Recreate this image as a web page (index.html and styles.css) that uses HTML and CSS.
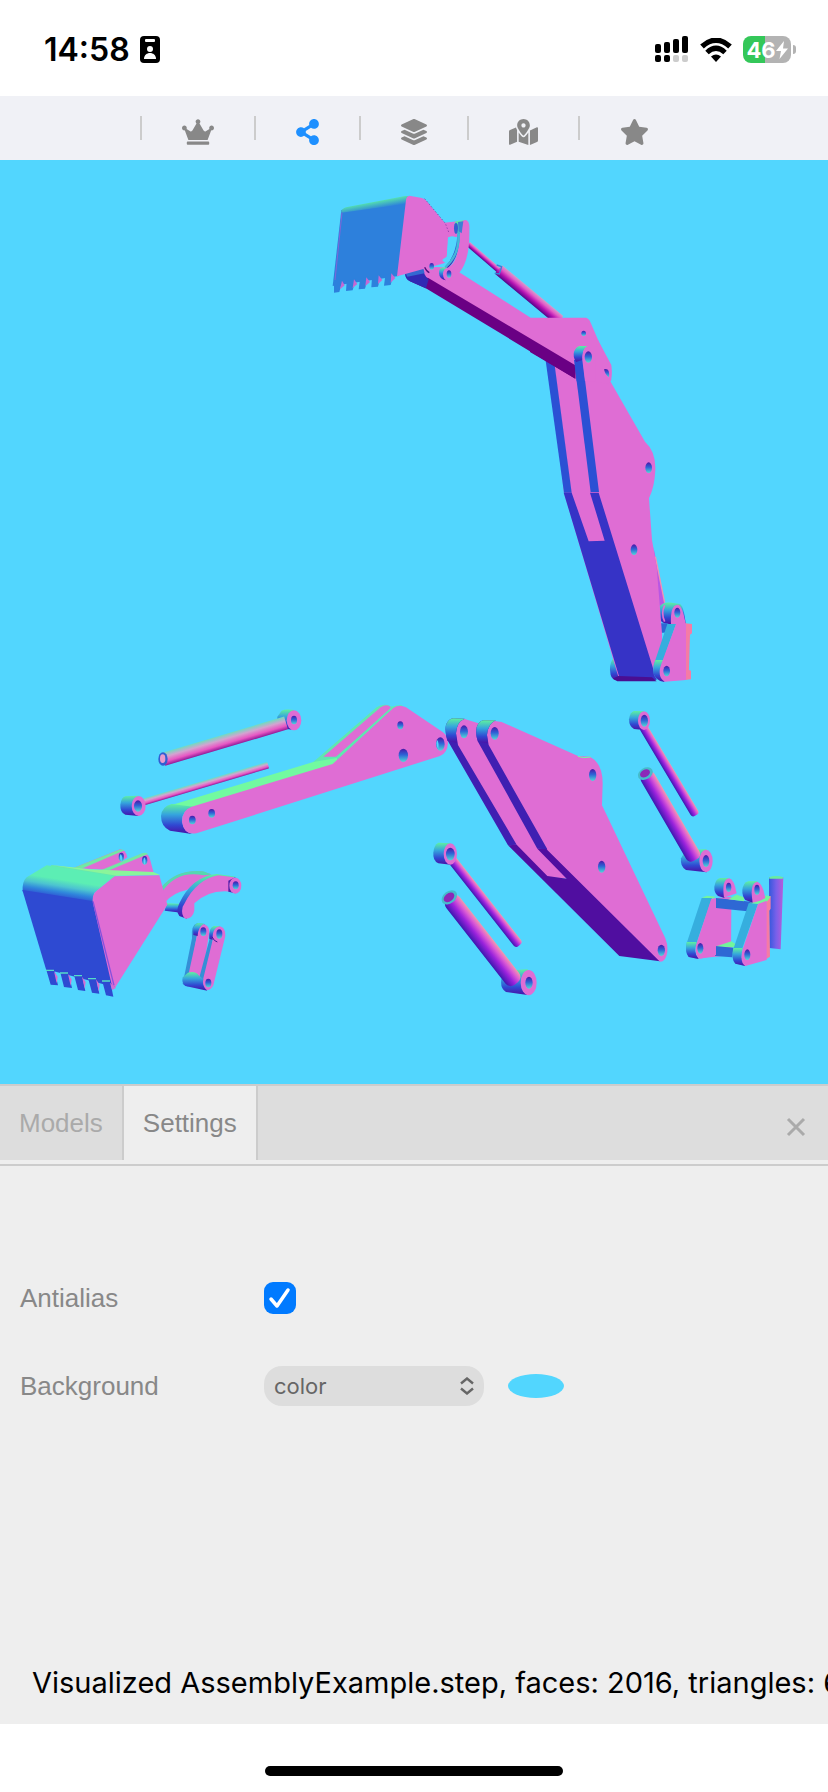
FILE: index.html
```html
<!DOCTYPE html>
<html lang="en">

<head>
    <meta charset="UTF-8">
    <meta name="viewport" content="width=device-width, initial-scale=1.0">
    <title>Model Viewer</title>
    <link rel="stylesheet" href="styles.css">
</head>

<body>

    <header class="statusbar">
        <div class="status-left">
            <span class="time">14:58</span>
            <svg class="badge-icon" viewBox="0 0 20 27">
                <rect width="20" height="27" rx="4" />
                <rect x="5" y="3" width="10" height="3" rx="1" fill="#fff" />
                <circle cx="10" cy="13" r="3" fill="#fff" />
                <path d="M4 23c0-4 3-6 6-6s6 2 6 6z" fill="#fff" />
            </svg>
        </div>
        <div class="status-right">
            <svg class="signal-icon" viewBox="0 0 34 27">
                <rect x="0" y="8" width="6" height="9" rx="2" />
                <rect x="9" y="6" width="6" height="11" rx="2" />
                <rect x="18" y="3" width="6" height="14" rx="2" />
                <rect x="27" y="0" width="6" height="17" rx="2" />
                <rect x="0" y="19" width="6" height="7" rx="2" />
                <rect x="9" y="19" width="6" height="7" rx="2" />
                <rect x="18" y="19" width="6" height="7" rx="2" fill="#ccc" />
                <rect x="27" y="19" width="6" height="7" rx="2" fill="#ccc" />
            </svg>
            <svg class="wifi-icon" viewBox="0 0 32 24">
                <path d="M2 8.500Q16-4 30 8.500" fill="none" stroke="#000" stroke-width="5.400" />
                <path d="M7 14.500Q16 6 25 14.500" fill="none" stroke="#000" stroke-width="5" />
                <path d="M11 18.500Q16 14.500 21 18.500L16 24z" />
            </svg>
            <div class="battery"><span>46</span><svg class="bolt-icon" viewBox="0 0 12 18"><path d="M8 0L0 10h5L3.500 18 12 7.500H7z" fill="#fff" /></svg></div>
        </div>
    </header>

    <nav class="toolbar">
        <a href="#" aria-label="Home"><svg width="32" height="26" viewBox="0 0 640 512"><path d="M528 448H112c-8.800 0-16 7.200-16 16v32c0 8.800 7.200 16 16 16h416c8.800 0 16-7.200 16-16v-32c0-8.800-7.200-16-16-16zm64-320c-26.500 0-48 21.500-48 48 0 7.100 1.600 13.700 4.400 19.800L476 239.200c-15.400 9.200-35.300 4-44.200-11.600L350.300 85C361 76.200 368 63 368 48c0-26.500-21.500-48-48-48s-48 21.500-48 48c0 15 7 28.200 17.700 37l-81.500 142.600c-8.900 15.600-28.900 20.800-44.200 11.600l-72.300-43.400c2.700-6 4.400-12.700 4.400-19.800 0-26.500-21.500-48-48-48S0 149.500 0 176s21.500 48 48 48c2.600 0 5.200-.4 7.700-.8L128 416h384l72.300-192.800c2.500.4 5.100.8 7.700.8 26.500 0 48-21.500 48-48s-21.500-48-48-48z" /></svg></a>
        <a href="#" class="active" aria-label="Share"><svg width="23" height="26" viewBox="0 0 448 512"><path d="M352 320c-22.600 0-43.400 7.800-59.800 20.900l-102.500-64a96.500 96.500 0 0 0 0-41.700l102.500-64C308.600 184.200 329.400 192 352 192c53 0 96-43 96-96S405 0 352 0s-96 43-96 96c0 7.200.8 14.100 2.300 20.800l-102.500 64.100C139.400 167.800 118.600 160 96 160c-53 0-96 43-96 96s43 96 96 96c22.600 0 43.400-7.800 59.800-20.900l102.500 64.100A96.300 96.300 0 0 0 256 416c0 53 43 96 96 96s96-43 96-96-43-96-96-96z" /></svg></a>
        <a href="#" aria-label="Layers"><svg width="26" height="26" viewBox="0 0 512 512"><path d="M12.400 148l232.900 105.700c6.800 3.100 14.500 3.100 21.300 0L499.600 148c16.500-7.500 16.500-32.500 0-40L266.700 2.300a25.600 25.600 0 0 0-21.300 0L12.400 108c-16.500 7.500-16.500 32.500 0 40zm487.200 88.300L441.500 210l-161.600 73.300c-7.600 3.400-15.600 5.100-23.900 5.100s-16.300-1.700-23.900-5.100L70.500 210l-58.100 26.300c-16.500 7.500-16.500 32.500 0 40l232.900 105.600c6.800 3.100 14.500 3.100 21.300 0l233-105.600c16.500-7.500 16.500-32.500 0-40zm0 127.800l-57.900-26.200-161.800 73.300c-7.600 3.400-15.600 5.200-23.900 5.200s-16.300-1.800-23.900-5.200L70.300 337.900l-57.900 26.200c-16.500 7.500-16.500 32.500 0 40l232.900 105.600c6.800 3.100 14.500 3.100 21.300 0l233-105.600c16.500-7.500 16.500-32.500 0-40z" /></svg></a>
        <a href="#" aria-label="Map"><svg width="29" height="26" viewBox="0 0 576 512"><path d="M288 0c-69.600 0-126 56.400-126 126 0 56.300 82.400 158.800 113.900 196 6.400 7.500 17.800 7.500 24.200 0C331.700 284.800 414 182.300 414 126 414 56.400 357.600 0 288 0zm0 168c-23.200 0-42-18.800-42-42s18.800-42 42-42 42 18.800 42 42-18.800 42-42 42zM20.100 216A32 32 0 0 0 0 245.700V496c0 11.300 11.400 19.100 21.900 14.900L160 448V214.900c-8.800-16-16.100-31.500-21.300-46.400L20.100 216zM288 359.700c-14.100 0-27.400-6.200-36.500-17-19.700-23.200-40.600-49.600-59.500-76.700v182l192 64V266c-18.900 27.100-39.800 53.500-59.500 76.700-9.100 10.800-22.400 17-36.500 17zm266.100-198.500L416 224v288l139.900-56a32 32 0 0 0 20.100-29.700V176c0-11.300-11.400-19.100-21.900-14.800z" /></svg></a>
        <a href="#" aria-label="Favorites"><svg width="29" height="26" viewBox="0 0 576 512"><path d="M259.300 17.800L194 150.200 47.900 171.500c-26.200 3.800-36.700 36.100-17.700 54.600l105.700 103-25 145.500c-4.500 26.300 23.200 46 46.400 33.700L288 439.600l130.700 68.700c23.200 12.200 50.900-7.400 46.400-33.700l-25-145.500 105.700-103c19-18.500 8.500-50.800-17.700-54.600L382 150.200 316.700 17.800c-11.700-23.600-45.600-23.900-57.400 0z" /></svg></a>
    </nav>

    <main class="viewer">
        <svg class="scene" viewBox="0 160 828 924">
            <defs>
                <linearGradient id="boss" x1="0" y1="0" x2="0" y2="1">
                    <stop offset="0" stop-color="#5ff0a0" />
                    <stop offset=".35" stop-color="#35a5dd" />
                    <stop offset=".7" stop-color="#3048d2" />
                    <stop offset="1" stop-color="#4a10a5" />
                </linearGradient>
                <linearGradient id="hole" x1="0" y1="0" x2="0" y2="1">
                    <stop offset="0" stop-color="#4a18a8" />
                    <stop offset=".45" stop-color="#2e62d6" />
                    <stop offset="1" stop-color="#50d8d8" />
                </linearGradient>
                <linearGradient id="tube" x1="0" y1="0" x2="0" y2="1">
                    <stop offset="0" stop-color="#70dcc0" />
                    <stop offset=".35" stop-color="#d3a3d0" />
                    <stop offset=".7" stop-color="#e858c4" />
                    <stop offset="1" stop-color="#901a98" />
                </linearGradient>
                <linearGradient id="rod" x1="0" y1="0" x2="0" y2="1">
                    <stop offset="0" stop-color="#f09aae" />
                    <stop offset=".25" stop-color="#dd5cd4" />
                    <stop offset=".58" stop-color="#9a22dc" />
                    <stop offset="1" stop-color="#3c18b0" />
                </linearGradient>
                <linearGradient id="ram" x1="0" y1="0" x2="0" y2="1">
                    <stop offset="0" stop-color="#d0a0cc" />
                    <stop offset=".3" stop-color="#e45cc8" />
                    <stop offset=".65" stop-color="#b010b0" />
                    <stop offset="1" stop-color="#50088a" />
                </linearGradient>
                <linearGradient id="lip-top" gradientUnits="userSpaceOnUse" x1="152" y1="68" x2="156" y2="90">
                    <stop offset="0" stop-color="#52dcb0" />
                    <stop offset="1" stop-color="#2d80dc" />
                </linearGradient>
                <linearGradient id="lip" gradientUnits="userSpaceOnUse" x1="150" y1="118" x2="141" y2="174">
                    <stop offset="0" stop-color="#5ceeb4" />
                    <stop offset=".35" stop-color="#4cc4d0" />
                    <stop offset=".65" stop-color="#3088dc" />
                    <stop offset="1" stop-color="#2e4ad2" />
                </linearGradient>
                <linearGradient id="pin" x1="0" y1="0" x2="1" y2="0">
                    <stop offset="0" stop-color="#3558dc" />
                    <stop offset=".5" stop-color="#7860ea" />
                    <stop offset="1" stop-color="#b85cda" />
                </linearGradient>
            </defs>

            <!-- assembled boom, lower part -->
            <g transform="translate(530 340) scale(.33333)">
                <path d="M370 620L404 790 388 800 380 740z" fill="#b857e4" />
                <path d="M376 650L404 788" stroke="#f092b4" stroke-width="4" />
                <path d="M388 800Q400 785 425 788L450 792Q462 800 467 852H415Q388 848 388 830z" fill="url(#boss)" />
                <path d="M404 796Q392 820 404 845" fill="none" stroke="#df6dd4" stroke-width="5" />
                <path d="M423 852Q420 795 443 794 457 794 467 852z" fill="#df6dd4" />
                <ellipse cx="442" cy="818" rx="9" ry="15" fill="url(#hole)" />
                <path d="M390 850H415V878H392z" fill="#2e68d4" />
                <path d="M465 850L486 852V880L480 884 477 990 483 992V1018L465 1020z" fill="#f57ba5" />
                <path d="M250 955Q235 975 242 1005 246 1020 262 1020L290 1020z" fill="url(#boss)" />
                <path d="M204 0L244 75Q248 110 240 122L345 305Q378 335 376 390 374 440 357 475L366 600 380 680 396 880V940L376 1018 265 1010 102 458 60 80 60 20z" fill="#df6dd4" />
                <path d="M47 62L74 76 125 458H102z" fill="#2b50d4" />
                <path d="M101 458H125L176 604 224 602 180 458H206L380 1020 268 1012z" fill="#3633c6" />
                <path d="M265 1008L366 1012 380 1024H262L248 1016z" fill="#4a0e92" />
                <path d="M132 60L158 64 207 456H182z" fill="#2b50d4" />
                <path d="M0 0L136 76V116L0 36z" fill="#6a0084" />
                <path d="M150 18H176Q155 30 156 66L140 66Q128 58 130 38 134 20 150 18z" fill="url(#boss)" />
                <ellipse cx="175" cy="51" rx="11" ry="17" fill="url(#hole)" />
                <path d="M222 87Q240 85 238 112 228 108 222 87z" fill="url(#hole)" />
                <ellipse cx="356" cy="383" rx="10" ry="16" fill="url(#hole)" />
                <ellipse cx="312" cy="629" rx="10" ry="16" fill="url(#hole)" />
                <path d="M396 880L405 878 396 930z" fill="#52d6fe" />
                <path d="M412 852H438L398 966Q382 990 398 1024 370 1020 370 992 370 972 376 960z" fill="#36aede" />
                <path d="M376 960H400Q384 990 404 1026 370 1020 370 992 370 972 376 960z" fill="url(#boss)" />
                <path d="M438 852H468V1020L404 1025Q380 1010 394 972z" fill="#df6dd4" />
                <ellipse cx="410" cy="993" rx="10" ry="16" fill="url(#hole)" />
            </g>

            <!-- assembled stick and bucket -->
            <g transform="translate(320 180) scale(.33333)">
                <g transform="translate(445 192) rotate(40.800)"><rect y="-8" width="125" height="16" fill="url(#ram)" /></g>
                <g transform="translate(535 268) rotate(39.700)"><rect y="-17" width="240" height="34" rx="4" fill="url(#ram)" /></g>
                <path d="M530 255L545 260 538 282 524 280" fill="none" stroke="#3585d8" stroke-width="4" />
                <path d="M257 276L310 260 372 262 420 278 632 413H798Q808 416 812 428L874 572V600L865 612 790 600 765 560 320 296z" fill="#df6dd4" />
                <path d="M256 280L325 294 766 556V596L320 326 270 304Q256 296 256 280z" fill="#6a0084" />
                <path d="M256 278L308 260Q310 286 326 298L318 325 270 304Q254 296 256 278z" fill="#3029b4" />
                <path d="M256 278L308 260 314 280 262 290z" fill="#3468d2" />
                <path d="M762 540L788 535 796 604H770z" fill="#2b50d4" />
                <path d="M780 498H802Q786 505 787 540L768 546Q758 530 762 515 768 500 780 498z" fill="url(#boss)" />
                <path d="M787 540Q788 500 806 500 824 502 826 530V604H795z" fill="#df6dd4" />
                <ellipse cx="805" cy="531" rx="11" ry="17" fill="url(#hole)" />
                <ellipse cx="791" cy="460" rx="7" ry="8" fill="url(#hole)" />
                <path d="M852 568Q870 562 867 592 856 586 852 568z" fill="url(#hole)" />
                <path d="M64 90L258 50 260 72 236 288 38 318z" fill="#2d80dc" />
                <path d="M64 92Q70 82 86 80L256 48 268 48 256 72 64 98z" fill="url(#lip-top)" />
                <path d="M66 98L44 310" stroke="#8065d8" stroke-width="3" />
                <path d="M42 300H68L58 336 42 338zM80 304L108 294 98 331 78 333zM120 298L146 288 135 326 116 328zM156 292L184 282 174 320 154 322zM196 286L222 276 212 315 192 317z" fill="#2d80dc" />
                <path d="M66 302L74 316 60 328zM102 298L112 312 98 324zM139 292L150 306 136 318zM176 286L187 300 174 312zM214 280L226 294 212 308z" fill="#c668d4" />
                <path d="M268 47L306 54Q316 57 322 66L374 128 412 124 420 170 384 172 380 240 372 250 256 282 231 289 258 60Q260 48 268 47z" fill="#df6dd4" />
                <path d="M386 172Q398 165 412 174L412 200Q400 240 382 246 366 248 368 238L380 230z" fill="#52d6fe" />
                <path d="M314 56L376 130 386 156" fill="none" stroke="#6a2599" stroke-width="2" stroke-dasharray="4 6" />
                <path d="M404 128Q410 120 436 121L430 160 420 190Q410 240 384 264L375 262Q410 225 412 160L404 154z" fill="url(#boss)" />
                <path d="M422 128Q428 119 438 120 450 124 448 150 450 240 418 278 410 292 374 300L378 266Q400 256 409 230 418 200 420 160z" fill="#df6dd4" />
                <path d="M416 162Q418 225 376 262" fill="none" stroke="#42b8d8" stroke-width="7" />
                <ellipse cx="408" cy="145" rx="6" ry="17" fill="#345fd0" />
                <path d="M414 126L430 124 425 160 416 154z" fill="#3d80d4" />
                <path d="M370 262Q356 264 357 280 358 298 378 301L384 264z" fill="url(#boss)" />
                <ellipse cx="384" cy="283" rx="15" ry="20" fill="#df6dd4" />
                <ellipse cx="387" cy="282" rx="7" ry="11" fill="url(#hole)" />
                <ellipse cx="335" cy="259" rx="7" ry="10" fill="url(#hole)" />
                <path d="M314 262Q320 275 328 278" fill="none" stroke="#53107c" stroke-width="4" />
            </g>

            <!-- stick with its two rams -->
            <g transform="translate(110 690) scale(.33333)">
                <path d="M515 62Q525 57 552 60V120L515 115Q500 100 502 80z" fill="url(#boss)" />
                <g transform="translate(160 208) rotate(-16.500)"><rect y="-20" width="384" height="40" fill="url(#tube)" /></g>
                <ellipse cx="552" cy="91" rx="22" ry="30" fill="#df6dd4" />
                <ellipse cx="552" cy="90" rx="9" ry="13" fill="url(#hole)" />
                <ellipse cx="159" cy="207" rx="14" ry="20" fill="#315ed4" />
                <ellipse cx="158" cy="206" rx="8" ry="13" fill="#e79bce" />
                <g transform="translate(95 338) rotate(-16.500)"><rect y="-10" width="396" height="20" rx="4" fill="url(#tube)" /></g>
                <path d="M46 319L86 317V378L46 374Q30 368 31 344 34 322 46 319z" fill="url(#boss)" />
                <ellipse cx="86" cy="348" rx="21" ry="30" fill="#df6dd4" />
                <ellipse cx="84" cy="348" rx="12" ry="17" fill="url(#hole)" />
                <path d="M610 216L800 52Q812 42 832 45L850 52 682 222z" fill="#5fe8b0" />
                <path d="M640 200L812 52Q826 42 838 48L844 56 678 200z" fill="#df6dd4" />
                <path d="M632 212L676 203 846 50Q860 44 878 46L682 222z" fill="#5fe8b0" />
                <path d="M185 345L610 216 680 204 685 222 250 352Q200 370 190 350z" fill="#72faa0" />
                <path d="M185 342L250 350Q215 362 216 392 220 425 246 432L180 422Q153 410 153 378 155 350 185 342z" fill="url(#boss)" />
                <path d="M245 350L668 222 850 54Q868 42 888 52L998 126Q1014 136 1014 160 1012 190 990 198L262 429Q222 438 216 396 216 360 245 350z" fill="#df6dd4" />
                <ellipse cx="247" cy="390" rx="10" ry="13" fill="url(#hole)" />
                <ellipse cx="305" cy="370" rx="10" ry="13" fill="url(#hole)" />
                <ellipse cx="871" cy="106" rx="9" ry="12" fill="url(#hole)" />
                <ellipse cx="880" cy="196" rx="14" ry="20" fill="url(#hole)" />
                <ellipse cx="991" cy="162" rx="13" ry="20" fill="url(#hole)" />
                <path d="M983 150Q988 162 985 178 979 170 979 160 979 154 983 150z" fill="#52d6fe" />
            </g>

            <!-- boom and four boom rams -->
            <g transform="translate(430 700) scale(.33333)">
                <path d="M72 90Q80 60 102 56L145 70 330 440 350 448 410 536 350 530 250 434 72 130z" fill="#df6dd4" />
                <path d="M70 55L104 56Q80 65 78 100L84 135 260 434 234 436 52 120Q44 95 48 74 56 56 70 55z" fill="#3f1fb2" />
                <path d="M70 55L104 56Q80 65 78 100L80 128 52 122Q44 95 48 74 56 56 70 55z" fill="url(#boss)" />
                <path d="M234 436L260 434 352 528 410 536 322 446 352 446 690 784 568 768z" fill="#500ea0" />
                <path d="M168 62Q185 60 215 66L444 168 480 170Q518 190 518 250L516 316 706 715Q714 735 712 755 708 785 690 785L352 450 172 140z" fill="#df6dd4" />
                <path d="M444 169L460 173 482 171" fill="none" stroke="#72faa0" stroke-width="3" />
                <path d="M160 61L198 61Q174 70 171 105L176 135 352 448 322 446 144 125Q136 105 140 82 146 64 160 61z" fill="#3f1fb2" />
                <path d="M160 61L198 61Q174 70 171 105L173 130 144 125Q136 105 140 82 146 64 160 61z" fill="url(#boss)" />
                <ellipse cx="102" cy="95" rx="12" ry="19" fill="url(#hole)" />
                <ellipse cx="194" cy="100" rx="12" ry="19" fill="url(#hole)" />
                <ellipse cx="488" cy="225" rx="11" ry="18" fill="url(#hole)" />
                <ellipse cx="515" cy="500" rx="11" ry="18" fill="url(#hole)" />
                <ellipse cx="694" cy="751" rx="11" ry="17" fill="url(#hole)" />

                <path d="M612 33L642 34V90L612 87Q597 80 597 58 600 36 612 33z" fill="url(#boss)" />
                <g transform="translate(638 78) rotate(59.200)"><rect y="-13" width="312" height="26" rx="10" fill="url(#rod)" /></g>
                <ellipse cx="642" cy="62" rx="18" ry="28" fill="#df6dd4" />
                <ellipse cx="643" cy="62" rx="11" ry="18" fill="url(#hole)" />
                <path d="M768 450L830 448V517L768 510Q750 500 753 475z" fill="url(#boss)" />
                <g transform="translate(646 220) rotate(59.900)"><rect y="-23" width="300" height="46" rx="16" fill="url(#rod)" /></g>
                <ellipse cx="646" cy="221" rx="24" ry="17" transform="rotate(-30 646 221)" fill="#45bccc" />
                <ellipse cx="645" cy="220" rx="16" ry="11" transform="rotate(-30 645 220)" fill="#8c28b8" />
                <ellipse cx="828" cy="483" rx="20" ry="34" fill="#df6dd4" />
                <ellipse cx="828" cy="483" rx="10" ry="18" fill="url(#hole)" />

                <path d="M25 428L62 430V494L25 490Q8 482 10 458 12 434 25 428z" fill="url(#boss)" />
                <g transform="translate(60 472) rotate(51.800)"><rect y="-14" width="336" height="28" rx="10" fill="url(#rod)" /></g>
                <ellipse cx="61" cy="462" rx="20" ry="32" fill="#df6dd4" />
                <ellipse cx="61" cy="462" rx="13" ry="19" fill="url(#hole)" />
                <path d="M225 812L293 808V885L228 876Q210 865 214 838z" fill="url(#boss)" />
                <g transform="translate(57 592) rotate(52)"><rect y="-26" width="328" height="52" rx="20" fill="url(#rod)" /></g>
                <ellipse cx="58" cy="592" rx="26" ry="18" transform="rotate(-38 58 592)" fill="#45bccc" />
                <ellipse cx="57" cy="592" rx="18" ry="12" transform="rotate(-38 57 592)" fill="#8c28b8" />
                <ellipse cx="296" cy="848" rx="24" ry="38" fill="#df6dd4" />
                <ellipse cx="297" cy="848" rx="11" ry="18" fill="url(#hole)" />
            </g>

            <!-- bucket, curved links and straight link -->
            <g transform="translate(10 840) scale(.33333)">
                <path d="M190 84L330 28Q348 30 352 52L300 90z" fill="#df6dd4" />
                <path d="M190 84L326 30Q336 26 344 31L215 86z" fill="#72e8a4" />
                <path d="M260 96L400 40Q416 40 420 58L432 102z" fill="#df6dd4" />
                <path d="M260 96L396 40Q406 36 414 42L280 98z" fill="#72e8a4" />
                <ellipse cx="334" cy="51" rx="8" ry="13" fill="url(#hole)" />
                <ellipse cx="404" cy="61" rx="8" ry="13" fill="url(#hole)" />
                <path d="M332 42Q340 50 334 64 326 52 332 42zM403 52Q410 61 404 74 397 62 403 52z" fill="#52d6fe" />

                <path d="M454 142Q500 88 575 94L602 102 590 120 530 150Q490 158 466 186z" fill="#df6dd4" />
                <path d="M454 142Q500 86 580 94L606 104 580 106Q500 90 456 156z" fill="#55d8b0" />
                <path d="M470 190L514 192V218L464 212z" fill="url(#boss)" />
                <path d="M508 190Q545 110 620 102L680 110 630 114Q570 130 540 182L530 236 508 228Q496 215 508 190z" fill="url(#boss)" />
                <path d="M524 190Q560 118 625 106L672 112V156Q600 144 553 190V212Q548 236 526 236 512 225 518 200z" fill="#df6dd4" />
                <path d="M655 122V155L676 160V112z" fill="#5020a8" />
                <ellipse cx="676" cy="137" rx="18" ry="24" fill="#df6dd4" />
                <ellipse cx="677" cy="136" rx="9" ry="12" fill="url(#hole)" />

                <path d="M124 75L265 94 320 106 300 120 120 90z" fill="#66e8ac" />
                <path d="M124 75L240 88 430 96 450 105 320 107z" fill="#8af59a" />
                <path d="M110 76L312 108 252 160 250 188 38 154Q36 125 50 112z" fill="url(#lip)" />
                <path d="M37 150L250 184 316 442 108 388z" fill="#2e4ad2" />
                <path d="M314 109L448 106 472 194 316 442Q308 440 304 430L250 195Q242 165 260 152z" fill="#df6dd4" />
                <path d="M249 184L312 436" stroke="#8551dc" stroke-width="4" />
                <path d="M108 386H132L144 436 122 434zM150 394H174L186 444 162 441zM192 404H216L226 453 204 450zM234 413H258L268 461 246 458zM276 420H300L310 470 288 466z" fill="#2e4ad2" />
                <path d="M132 394L143 410 140 430zM174 402L185 418 182 438zM216 410L227 426 224 446zM258 418L269 434 266 454zM300 428L318 444 306 450z" fill="#d66cd4" />
                <path d="M108 391H132M150 399H174M192 407H216M234 416H258M276 423H300" stroke="#55dcc8" stroke-width="4" />

                <path d="M562 250L585 252 560 290 535 440 518 432 546 295Q542 255 562 250z" fill="#348fd6" />
                <path d="M560 290Q560 255 580 252 598 256 598 276L575 420 534 410z" fill="#df6dd4" />
                <path d="M550 285Q546 252 564 249L582 251Q564 260 563 288z" fill="url(#boss)" />
                <ellipse cx="580" cy="275" rx="9" ry="13" fill="url(#hole)" />
                <path d="M615 258L630 258 608 300 590 450 566 420 598 300Q596 262 615 258z" fill="#348fd6" />
                <path d="M598 296Q596 262 612 258L632 258Q608 268 610 300z" fill="url(#boss)" />
                <path d="M608 300Q606 262 630 259 648 264 646 288L610 436Q602 452 590 450 574 440 580 415z" fill="#df6dd4" />
                <path d="M534 398Q555 392 566 406L580 418Q574 438 592 452L526 438Q514 430 518 412z" fill="url(#boss)" />
                <ellipse cx="628" cy="282" rx="9" ry="14" fill="url(#hole)" />
                <path d="M606 290Q612 304 622 306" fill="none" stroke="#441898" stroke-width="3" />
                <ellipse cx="595" cy="429" rx="9" ry="13" fill="url(#hole)" />
            </g>

            <!-- swing bracket and pin -->
            <g transform="translate(670 860) scale(.33333)">
                <path d="M297 52L340 52 332 268 298 264z" fill="url(#pin)" />
                <path d="M297 52Q318 44 340 52L338 56H298z" fill="#68eca0" />
                <path d="M284 112L302 108V146L298 152 300 290 284 300z" fill="#f57ba5" />
                <path d="M120 116L184 110V285L80 296z" fill="#df6dd4" />
                <path d="M186 152H232L190 262 184 245z" fill="#52d6fe" />
                <path d="M135 260L184 244 200 254 192 262z" fill="#72f59c" />
                <path d="M135 258L196 264 186 292 135 288z" fill="#2e68d4" />
                <path d="M138 114L250 126 232 154 138 144z" fill="#2e68d4" />
                <path d="M95 114L110 107 138 110 124 118zM175 118L200 104 222 112V124zM236 130L270 120 290 106 302 110 290 126 262 132z" fill="#72f59c" />
                <path d="M95 114H126L80 248Q70 275 84 297L56 290Q44 275 50 250z" fill="#36aede" />
                <path d="M50 246H80Q68 275 86 297L56 291Q44 278 50 246z" fill="url(#boss)" />
                <path d="M124 116L138 118V285L92 296Q72 290 78 256z" fill="#df6dd4" />
                <ellipse cx="91" cy="265" rx="9" ry="16" fill="url(#hole)" />
                <path d="M150 54H176L164 114 144 108Q132 98 133 80 136 58 150 54z" fill="url(#boss)" />
                <path d="M162 113Q154 58 178 55 192 58 200 100z" fill="#df6dd4" />
                <ellipse cx="176" cy="82" rx="8" ry="14" fill="url(#hole)" />
                <path d="M235 64H262L248 128 226 120Q216 108 217 90 220 68 235 64z" fill="url(#boss)" />
                <path d="M248 128Q238 68 262 65 278 70 286 114L270 122z" fill="#df6dd4" />
                <ellipse cx="261" cy="89" rx="8" ry="15" fill="url(#hole)" />
                <path d="M236 130L264 132 218 262Q210 290 224 318L196 310Q184 295 190 268z" fill="#36aede" />
                <path d="M190 264H218Q208 292 226 318L196 311Q182 295 190 264z" fill="url(#boss)" />
                <path d="M264 132L290 122V300L226 318Q208 306 218 268z" fill="#df6dd4" />
                <ellipse cx="232" cy="284" rx="9" ry="16" fill="url(#hole)" />
            </g>
        </svg>
    </main>

    <section class="panel">
        <div class="tabs">
            <button class="tab">Models</button>
            <button class="tab selected">Settings</button>
            <button class="close" aria-label="Close">
                <svg width="20" height="20" viewBox="0 0 20 20"><path d="M2 2L18 18M18 2L2 18" stroke="#aaa" stroke-width="3" /></svg>
            </button>
        </div>
        <form class="settings">
            <div class="row">
                <label for="antialias">Antialias</label>
                <input type="checkbox" id="antialias" checked>
            </div>
            <div class="row">
                <label for="background">Background</label>
                <div class="select">
                    <select id="background">
                        <option>color</option>
                    </select>
                    <svg class="arrows" viewBox="0 0 16 18"><path d="M2 6.500L8 1.500 14 6.500M2 11.500L8 16.500 14 11.500" fill="none" stroke="#666" stroke-width="2.400" /></svg>
                </div>
                <button type="button" class="swatch" aria-label="Background color"></button>
            </div>
        </form>
        <p class="message">Visualized AssemblyExample.step, faces: 2016, triangles: 6</p>
    </section>

    <footer class="homebar">
        <div class="handle"></div>
    </footer>

</body>

</html>
```
FILE: styles.css
```css
* {
    padding: 0px;
    margin: 0px;
    box-sizing: border-box;
}

body {
    display: flex;
    flex-direction: column;
    min-height: 100vh;
    overflow-x: hidden;
    background-color: white;
    font-family: "Liberation Sans", Arial, sans-serif;
}

button {
    border: none;
    background: none;
    font-family: inherit;
    cursor: pointer;
}

svg {
    display: block;
}

.statusbar {
    display: flex;
    justify-content: space-between;
    align-items: center;
    height: 96px;
    padding: 3px 32px 0px 44px;
    font-family: Inter, sans-serif;
}

.status-left,
.status-right {
    display: flex;
    align-items: center;
}

.status-left {
    gap: 10px;
}

.status-right {
    gap: 11px;
}

.time {
    font-size: 32px;
    font-weight: 600;
}

.badge-icon {
    width: 20px;
    height: 27px;
}

.signal-icon {
    width: 34px;
    height: 27px;
}

.wifi-icon {
    width: 32px;
    height: 24px;
}

.battery {
    position: relative;
    display: flex;
    align-items: center;
    justify-content: center;
    width: 48px;
    height: 27px;
    margin-right: 5px;
    border-radius: 8px;
    color: white;
    font-size: 22px;
    font-weight: 700;
    background: linear-gradient(to right, #34c759 46%, #b3b3b3 46%);
}

.battery::after {
    content: "";
    position: absolute;
    right: -5px;
    width: 3px;
    height: 9px;
    border-radius: 0px 3px 3px 0px;
    background-color: #b3b3b3;
}

.bolt-icon {
    width: 12px;
    height: 18px;
}

.toolbar {
    display: flex;
    justify-content: center;
    height: 64px;
    padding-top: 20px;
    background-color: #f0f1f6;
}

.toolbar a {
    display: flex;
    padding-right: 40px;
    fill: #888;
}

.toolbar a::before {
    content: "";
    width: 2px;
    height: 24px;
    margin-right: 40px;
    background-color: #ccc;
}

.toolbar svg {
    margin-top: 3px;
}

.toolbar .active {
    fill: #1e90ff;
}

.viewer {
    background-color: #52d6fe;
}

.scene {
    width: 100%;
}

.panel {
    flex: 1;
    display: flex;
    flex-direction: column;
    border-top: 2px solid #ccc;
    background-color: #eee;
}

.tabs {
    display: flex;
    height: 80px;
    border-bottom: 2px solid #ccc;
    background: linear-gradient(#ddd 74px, #eee 74px);
}

.tab {
    height: 74px;
    padding: 0px 19px;
    border-right: 2px solid #ccc;
    color: #aaa;
    font-size: 26px;
}

.selected {
    color: #888;
    background-color: #eee;
}

.close {
    margin-left: auto;
    padding: 3px 22px 0px;
}

.settings {
    padding: 116px 20px 0px;
}

.row {
    display: flex;
    align-items: center;
    height: 32px;
    margin-bottom: 56px;
}

.row label {
    width: 244px;
    color: #888;
    font-size: 26px;
}

.row input {
    appearance: none;
    width: 32px;
    height: 32px;
    border-radius: 9px;
    background: #007aff url("data:image/svg+xml,%3Csvg xmlns='http://www.w3.org/2000/svg' viewBox='0 0 32 32'%3E%3Cpath d='M7 17L13 24 24 8' fill='none' stroke='white' stroke-width='3.500' stroke-linecap='round' stroke-linejoin='round'/%3E%3C/svg%3E");
}

.select {
    position: relative;
    width: 220px;
}

.select select {
    appearance: none;
    width: 100%;
    height: 40px;
    padding: 0px 10px;
    border: none;
    border-radius: 18px;
    color: #666;
    font-family: Inter, sans-serif;
    font-size: 22px;
    background-color: #ddd;
}

.arrows {
    position: absolute;
    top: 11px;
    right: 9px;
    width: 16px;
    height: 18px;
    pointer-events: none;
}

.swatch {
    width: 56px;
    height: 24px;
    margin-left: 24px;
    border-radius: 50%;
    background-color: #52d6fe;
}

.message {
    margin-top: auto;
    padding: 0px 0px 22px 32px;
    overflow: hidden;
    white-space: nowrap;
    font-family: Inter, sans-serif;
    font-size: 29px;
    line-height: 38px;
}

.homebar {
    display: flex;
    justify-content: center;
    height: 68px;
    padding-top: 42px;
}

.handle {
    width: 36%;
    height: 10px;
    border-radius: 5px;
    background-color: black;
}
```
